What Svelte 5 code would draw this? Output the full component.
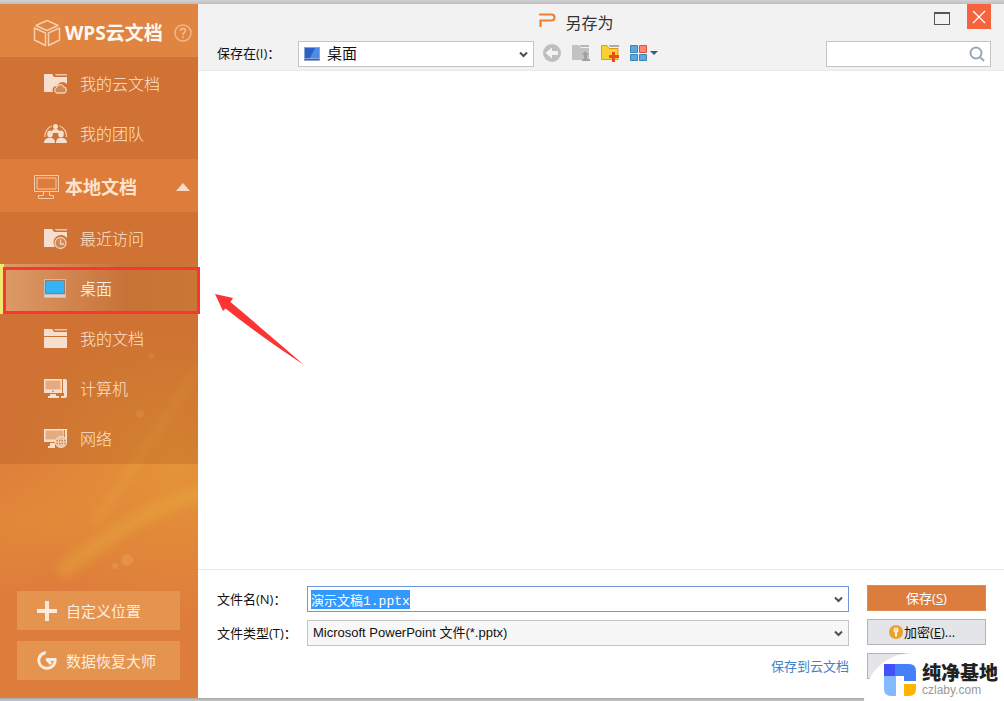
<script>
  import { onMount } from 'svelte';

  const cloudItems = [
    { icon: 'cloud', label: '我的云文档' },
    { icon: 'team', label: '我的团队' }
  ];
  const localItems = [
    { icon: 'recent', label: '最近访问' },
    { icon: 'desktop', label: '桌面' },
    { icon: 'docs', label: '我的文档' },
    { icon: 'computer', label: '计算机' },
    { icon: 'network', label: '网络' }
  ];

  let active = $state('desktop');
  let fileName = $state('演示文稿1.pptx');
  let nameField;

  onMount(() => {
    nameField.focus();
    nameField.select();
  });
</script>

{#snippet chevron()}
  <svg class="chevron" width="9" height="7" viewBox="0 0 9 7" aria-hidden="true">
    <path d="M1 1.500 4.500 5 8 1.500" fill="none" stroke="#505050" stroke-width="2" />
  </svg>
{/snippet}

{#snippet placeIcon(name)}
  <svg class="place-icon" width="24" height="22" viewBox="0 0 24 22" aria-hidden="true">
    {#if name === 'cloud'}
      <path d="M0 1h8l2 3h13v7a6 6 0 0 0-10 2 4 4 0 0 0-4 6H0z" fill="#f6dfce" />
      <path d="M11 1h12v1.500H12z" fill="#eec5a8" />
      <path d="M12.500 20a3 3 0 0 1 0-5.500 4 4 0 0 1 7.500-.5 3.200 3.200 0 0 1 .5 6z" fill="#cf8a58" stroke="#f3cfb4" stroke-width="1.300" />
    {:else if name === 'team'}
      <path d="M1 14A10.500 10.500 0 0 1 8 3M15.500 3a10.500 10.500 0 0 1 7 11" fill="none" stroke="#f0c9ac" stroke-width="1.300" />
      <g fill="#f6dfce">
        <circle cx="11.500" cy="3.500" r="2.500" /><path d="M7.500 10q0-4 4-4t4 4z" />
        <ellipse cx="6" cy="11" rx="2.800" ry="3.500" /><path d="M0 20q0-4 4-5h4q3 1 3 5z" />
        <ellipse cx="17" cy="11" rx="2.800" ry="3.500" /><path d="M12 20q0-4 3-5h4q4 1 4 5z" />
      </g>
    {:else if name === 'recent'}
      <path d="M0 1h8l2 3h13v6a7 7 0 0 0-12 9H0z" fill="#f6dfce" />
      <path d="M11 1h12v1.500H12z" fill="#eec5a8" />
      <circle cx="16.500" cy="15" r="5.500" fill="#cf8650" stroke="#f3cfb4" stroke-width="1.300" />
      <path d="M16.500 11.500V16h3.500" fill="none" stroke="#f3cfb4" stroke-width="1.300" />
    {:else if name === 'desktop'}
      <path d="M0 1h22v19H0z" fill="#c9bdb9" />
      <path d="M1.500 2.500h19v13h-19z" fill="#31b6f3" stroke="#8e7c78" />
      <path d="M1 17h20v2H1z" fill="#ddd1ca" />
    {:else if name === 'docs'}
      <path d="M0 1h8l2 3h13v4H0zM0 9h23v11H0z" fill="#f6dfce" />
      <path d="M10 1h13v1.500H11z" fill="#eec5a8" />
    {:else if name === 'computer'}
      <path d="M19 1h2q2 0 2 2v15q0 2-3 2h-3v-2h3v-3h-1z" fill="#f6dfce" />
      <path d="M0 1h18v14H0z" fill="#f6dfce" />
      <path d="M1.500 2.500h15v9h-15z" fill="#e6aa80" />
      <circle cx="9" cy="13.200" r=".8" fill="#b96f3d" />
      <path d="M6 16h6v2h3v2H4v-2h2z" fill="#f6dfce" />
    {:else}
      <path d="M0 1h23v13H0z" fill="#f6dfce" />
      <path d="M1.500 2.500h18v9h-18z" fill="#e6aa80" />
      <path d="M20.500 2v10" stroke="#cf8340" />
      <path d="M6 15h5v5H4v-2h2z" fill="#f6dfce" />
      <circle cx="17" cy="14" r="5.500" fill="#cf8040" stroke="#f6dfce" stroke-width="1.200" />
      <path d="M17 8.500v11M11.500 14h11M13 11h8M13 17h8" stroke="#f6dfce" fill="none" />
      <ellipse cx="17" cy="14" rx="2.800" ry="5.500" fill="none" stroke="#f6dfce" />
    {/if}
  </svg>
{/snippet}

{#snippet placeList(items)}
  <ul class="places">
    {#each items as item}
      <li>
        <button class="place" class:active={active === item.icon} onclick={() => (active = item.icon)}>
          {@render placeIcon(item.icon)}
          <span>{item.label}</span>
        </button>
      </li>
    {/each}
  </ul>
{/snippet}

<div class="backdrop">
  <div class="edge top"></div>
  <div class="dialog">
    <aside>
      <svg class="glow" viewBox="0 0 198 400" preserveAspectRatio="none" aria-hidden="true">
        <defs>
          <radialGradient id="warm">
            <stop offset="0" stop-color="#e9a236" stop-opacity=".6" />
            <stop offset="1" stop-color="#e9a236" stop-opacity="0" />
          </radialGradient>
          <filter id="soft" x="-20%" y="-20%" width="140%" height="140%"><feGaussianBlur stdDeviation="4" /></filter>
        </defs>
        <ellipse cx="175" cy="170" rx="170" ry="150" fill="url(#warm)" />
        <ellipse cx="20" cy="225" rx="120" ry="70" fill="url(#warm)" opacity=".5" />
        <g filter="url(#soft)" fill="none" stroke="#e9b040">
          <path d="M198 70Q160 130 95 225" stroke-width="5" opacity=".4" />
          <path d="M205 195Q150 205 60 275" stroke-width="16" opacity=".35" />
        </g>
        <g fill="#efb268" opacity=".3">
          <circle cx="127" cy="262" r="6" /><circle cx="115" cy="268" r="3" /><circle cx="140" cy="116" r="4" /><circle cx="151" cy="58" r="3" />
        </g>
      </svg>
      <div class="section cloud-head">
        <svg width="28" height="28" viewBox="0 0 28 28" fill="none" stroke="#f7cfae" stroke-width="1.500" stroke-linejoin="round" aria-hidden="true">
          <path d="M14 1.500 25 6.500 14 11.500 3 6.500z" />
          <path d="M1.500 9 12.500 14v12.500L1.500 21z" />
          <path d="M26.500 9 15.500 14v12.500L26.500 21z" />
        </svg>
        <h2>WPS云文档</h2>
        <button class="help" aria-label="帮助">
          <svg width="18" height="18" viewBox="0 0 18 18" fill="none" stroke="#f1b78a" aria-hidden="true">
            <circle cx="9" cy="9" r="8" stroke-width="1.500" />
            <path d="M6.500 7q0-2.500 2.500-2.500T11.500 7Q11.500 8 9 9.800V11M9 12.300v1.700" stroke-width="1.800" />
          </svg>
        </button>
      </div>
      {@render placeList(cloudItems)}
      <div class="section local-head">
        <svg width="28" height="28" viewBox="0 0 28 28" fill="none" stroke="#f5cbad" aria-hidden="true">
          <path d="M1.500 2.500h24v16h-24zM4 5h19v11H4z" />
          <path d="M10.500 18.500v4h-5v3h15v-3h-4v-4" />
        </svg>
        <h2>本地文档</h2>
        <button class="help" aria-label="收起">
          <svg width="14" height="8" viewBox="0 0 14 8" aria-hidden="true"><path d="M7 0l7 8H0z" fill="#f9dcc7" /></svg>
        </button>
      </div>
      {@render placeList(localItems)}
      <div class="extras">
        <button>
          <svg width="20" height="20" viewBox="0 0 20 20" aria-hidden="true"><path d="M8 0h4v8h8v4h-8v8H8v-8H0V8h8z" fill="#fdecdb" /></svg>
          自定义位置
        </button>
        <button>
          <svg width="20" height="20" viewBox="0 0 20 20" fill="none" stroke="#fdecdb" aria-hidden="true">
            <path d="M8 2Q2 3.500 1.700 9.500A8.300 8.300 0 0 0 18 11V8.500H9" stroke-width="3" />
            <path d="M9.500 8 14 13" stroke-width="3" />
            <path d="M4 3l5-2" stroke-width="2" />
          </svg>
          数据恢复大师
        </button>
      </div>
    </aside>

    <main>
      <header>
        <div class="title-row">
          <h1>
            <svg width="17" height="15" viewBox="0 0 17 15" aria-hidden="true">
              <path d="M0 1.500h12.500q3 0 3 3t-3 3H1.500V14" fill="none" stroke="#f0802f" stroke-width="2.200" />
            </svg>
            另存为
          </h1>
          <div class="window-buttons">
            <button class="maximize" aria-label="最大化"><i></i></button>
            <button class="close" aria-label="关闭">
              <svg width="14" height="14" viewBox="0 0 14 14" aria-hidden="true"><path d="M1 1l12 12M13 1 1 13" stroke="#fff" stroke-width="1.300" /></svg>
            </button>
          </div>
        </div>
        <div class="tool-row">
          <label for="folder">保存在(I)：</label>
          <div class="field folder">
            <select id="folder"><option>桌面</option></select>
            <svg class="lead" width="16" height="14" viewBox="0 0 16 14" aria-hidden="true">
              <path d="M0 0h16v14H0z" fill="#8aa4cf" /><path d="M1 1h14v10H1z" fill="#2c60c8" />
              <path d="M6 11 11 1h4v10z" fill="#4f8ce8" /><path d="M1 12h14v1H1z" fill="#425f94" />
            </svg>
            {@render chevron()}
          </div>
          <div class="tools">
            <button aria-label="后退">
              <svg width="20" height="20" viewBox="0 0 20 20" aria-hidden="true">
                <circle cx="10" cy="10" r="9" fill="#bfbfbf" />
                <path d="M3.500 10l6.500-5.500V8h6v4h-6v3.500z" fill="#f4f4f4" />
              </svg>
            </button>
            <button aria-label="向上一级">
              <svg width="20" height="20" viewBox="0 0 20 20" aria-hidden="true">
                <path d="M1 2h7l2 3h8v12H1z" fill="#c2c2c2" /><path d="M9 2h9v2h-8z" fill="#b5b5b5" />
                <path d="M14 8l4 4h-2v4h3v2h-8v-2h2v-4h-2z" fill="#a0a0a0" />
              </svg>
            </button>
            <button aria-label="新建文件夹">
              <svg width="20" height="20" viewBox="0 0 20 20" aria-hidden="true">
                <path d="M1.500 2.500H7l2 3h9v11H1.500z" fill="#fbd12f" stroke="#d99c1c" />
                <path d="M9 2h10v2h-9z" fill="#aaa" />
                <path d="M12 9h3v3h4v3h-4v4h-3v-4H9v-3h3z" fill="#ee4b1c" />
              </svg>
            </button>
            <button aria-label="视图">
              <svg width="30" height="20" viewBox="0 0 30 20" aria-hidden="true">
                <g stroke="#3b83bb" fill="#5fa6d9"><path d="M1.500 2.500h7v7h-7zM1.500 11.500h7v6h-7zM10.500 11.500h7v6h-7z" /></g>
                <path d="M10.500 2.500h7v7h-7z" fill="#ff8674" stroke="#e35040" />
                <path d="M21 8h8l-4 4z" fill="#355b8c" />
              </svg>
            </button>
          </div>
          <div class="field search">
            <input type="search" aria-label="搜索" />
            <svg class="chevron" width="16" height="16" viewBox="0 0 16 16" fill="none" stroke="#9da8b2" stroke-width="2" aria-hidden="true">
              <circle cx="7" cy="7" r="5.500" /><path d="M10.500 10.500 15 15" />
            </svg>
          </div>
        </div>
      </header>

      <section class="files" aria-label="文件列表"></section>

      <footer>
        <div class="form">
          <label for="name">文件名(N)：</label>
          <div class="field name">
            <input id="name" type="text" autocomplete="off" bind:value={fileName} bind:this={nameField} />
            {@render chevron()}
          </div>
          <label for="type">文件类型(T)：</label>
          <div class="field type">
            <select id="type"><option>Microsoft PowerPoint 文件(*.pptx)</option></select>
            {@render chevron()}
          </div>
          <a href="#cloud">保存到云文档</a>
        </div>
        <div class="actions">
          <button class="primary">保存(<u>S</u>)</button>
          <button class="encrypt">
            <svg width="14" height="14" viewBox="0 0 14 14" aria-hidden="true">
              <circle cx="7" cy="7" r="7" fill="#e9a32d" />
              <circle cx="7" cy="5" r="2.500" fill="#fff3d8" /><path d="M6 6h2v5.500H6z" fill="#fff3d8" />
              <circle cx="7" cy="4.500" r=".8" fill="#e9a32d" />
            </svg>加密(<u>E</u>)...
          </button>
          <button aria-label="取消"></button>
        </div>
      </footer>
    </main>

    <div class="marker"></div>
    <svg class="arrow" width="90" height="74" viewBox="0 0 90 74" aria-hidden="true">
      <path d="M0 1 18 5 15.500 9Q50 38 89 72 45 43 10.500 15.500L8 18z" fill="#fb3434" />
    </svg>
  </div>
  <div class="edge bottom"></div>

  <div class="brand">
    <svg width="32" height="32" viewBox="0 0 32 32" aria-hidden="true">
      <path d="M0 0h11v12H0z" fill="#4251fb" />
      <path d="M11 0h14q7 0 7 7v10H20v-5h-9z" fill="#4580fb" />
      <path d="M0 12h12v20H7q-7 0-7-7z" fill="#82b9ff" />
      <path d="M20 20h12v5q0 7-7 7h-5z" fill="#ffb500" />
    </svg>
    <div><strong>纯净基地</strong><span>czlaby.com</span></div>
  </div>
</div>

<style>
  :global(body) {
    margin: 0;
  }
  .backdrop {
    position: relative;
    display: flex;
    flex-direction: column;
    min-height: 100vh;
    background: #fff;
    color: #111;
    font: 13px/20px "Open Sans", "Noto Sans CJK SC", sans-serif;
  }
  .backdrop *,
  .backdrop {
    box-sizing: border-box;
  }
  button,
  input,
  select {
    margin: 0;
    padding: 0;
    border: 0;
    border-radius: 0;
    background: none;
    color: inherit;
    font: inherit;
    outline: none;
    appearance: none;
  }
  svg {
    display: block;
    flex: none;
  }
  h1,
  h2,
  ul {
    margin: 0;
    padding: 0;
    font-weight: 400;
    list-style: none;
  }
  .edge {
    height: 4px;
    background: linear-gradient(#d2d2d2, #bdbdbd);
  }
  .edge.bottom {
    height: 3px;
    background: linear-gradient(#a8a8a8, #c8c8c8);
  }
  .dialog {
    position: relative;
    display: flex;
    flex: 1;
  }

  aside {
    position: relative;
    isolation: isolate;
    display: flex;
    flex: none;
    flex-direction: column;
    width: 198px;
    background: #de7d3b;
    color: #fde2cd;
  }
  .glow {
    position: absolute;
    z-index: -1;
    bottom: 0;
    left: 0;
    width: 100%;
    height: 400px;
    overflow: hidden;
  }
  .section {
    display: flex;
    align-items: center;
    height: 54px;
    padding: 2px 6px 0 33px;
    border-bottom: 1px solid #cb7335;
  }
  .cloud-head {
    padding-top: 4px;
    background: #e08442;
  }
  .section h2 {
    flex: 1;
    padding-left: 4px;
    font-size: 18px;
    font-weight: 700;
    line-height: 24px;
    white-space: nowrap;
  }
  .cloud-head h2 {
    color: #fff8f0;
    font-size: 19px;
  }
  .help {
    display: grid;
    place-items: center;
    width: 18px;
    height: 18px;
  }
  .places {
    padding-top: 1px;
    background: rgba(166, 86, 30, 0.27);
  }
  .place {
    display: flex;
    align-items: center;
    gap: 12px;
    width: 100%;
    height: 50px;
    padding-left: 44px;
    font-size: 16px;
    font-weight: 300;
  }
  .place.active {
    background: linear-gradient(90deg, #dc9a68, #c77236 65%, #c97834);
    color: #fff;
    border-left: 4px solid #f1e96e;
    padding-left: 40px;
  }
  .extras {
    display: grid;
    gap: 11px;
    margin-top: auto;
    padding: 24px 18px 18px 17px;
  }
  .extras button {
    display: flex;
    align-items: center;
    gap: 9px;
    height: 39px;
    padding-left: 20px;
    background: #e5944f;
    color: #fdecdb;
    font-size: 15px;
  }

  main {
    display: flex;
    flex: 1;
    flex-direction: column;
    min-width: 0;
  }
  header {
    height: 67px;
    border-bottom: 1px solid #e9e9e9;
    background: #f2f2f2;
  }
  .title-row {
    display: grid;
    grid-template-columns: 1fr auto 1fr;
    height: 37px;
    padding: 0 13px 0 0;
  }
  h1 {
    display: flex;
    grid-column: 2;
    align-items: center;
    gap: 9px;
    margin-right: 36px;
    color: #333;
    font-size: 16px;
    line-height: 24px;
  }
  h1 svg {
    margin-bottom: 4px;
  }
  .window-buttons {
    display: flex;
    justify-content: flex-end;
    gap: 16px;
  }
  .maximize {
    display: grid;
    width: 18px;
    height: 28px;
    place-items: center;
  }
  .maximize i {
    width: 16px;
    height: 13px;
    border: 1px solid #555;
    border-top-width: 2px;
  }
  .close {
    display: grid;
    place-items: center;
    width: 24px;
    height: 25px;
    background: #f5633f;
  }
  .tool-row {
    display: flex;
    align-items: center;
    height: 26px;
    padding: 0 13px 0 19px;
  }
  .tool-row label {
    width: 81px;
    padding-bottom: 2px;
    white-space: nowrap;
  }
  .field {
    display: grid;
    align-items: center;
    height: 26px;
    border: 1px solid #c4c4c4;
    background: #fff;
  }
  .field > :global(*) {
    grid-area: 1 / 1;
  }
  .field input,
  .field select {
    width: 100%;
    height: 24px;
    min-width: 0;
    padding: 0 22px 0 4px;
  }
  .chevron {
    justify-self: end;
    margin-right: 5px;
    pointer-events: none;
  }
  .lead {
    margin-left: 5px;
    pointer-events: none;
  }
  .folder {
    flex: 0 1 236px;
  }
  .folder select {
    padding: 0 22px 2px 28px;
    font-size: 15px;
  }
  .tools {
    display: flex;
    gap: 9px;
    padding: 0 0 2px 8px;
  }
  .search {
    flex: 0 1 165px;
    margin-left: auto;
  }

  .files {
    flex: 1;
    background: #fff;
  }
  footer {
    display: flex;
    gap: 18px;
    height: 129px;
    padding: 15px 18px 0 19px;
    border-top: 1px solid #e6eaec;
  }
  .form {
    display: grid;
    flex: 1;
    grid-template-columns: 90px 1fr;
    grid-auto-rows: 26px;
    row-gap: 8px;
    align-items: center;
    min-width: 0;
    padding-top: 1px;
  }
  .form label {
    white-space: nowrap;
  }
  .name {
    border-color: #7694dc;
  }
  .name input {
    padding-left: 3px;
    font: 13px/16px "Liberation Mono", "Noto Sans CJK SC", monospace;
  }
  .name input::selection {
    background: #3399ff;
    color: #fff;
  }
  .type {
    background: #f7f7f7;
  }
  .type select {
    padding-left: 5px;
    font-family: "Liberation Sans", "Noto Sans CJK SC", sans-serif;
  }
  .form a {
    grid-column: 2;
    justify-self: end;
    padding-bottom: 2px;
    color: #4581c6;
    text-decoration: none;
  }
  .actions {
    display: grid;
    flex: none;
    grid-auto-rows: 26px;
    gap: 8px;
    width: 119px;
  }
  .actions button {
    display: flex;
    align-items: center;
    justify-content: center;
    border: 1px solid #b0b4b8;
    background: #e3e5e8;
  }
  .actions .encrypt {
    padding-right: 9px;
  }
  .actions svg {
    margin-right: 1px;
  }
  .actions .primary {
    border-color: #e1894e;
    background: #dc7d3d;
    color: #fff;
  }

  .marker {
    position: absolute;
    top: 263px;
    left: 3px;
    width: 197px;
    height: 47px;
    border: 3px solid #fb3434;
    pointer-events: none;
  }
  .arrow {
    position: absolute;
    top: 289px;
    left: 215px;
    pointer-events: none;
  }
  .brand {
    position: absolute;
    right: 0;
    bottom: 0;
    display: flex;
    align-items: center;
    gap: 6px;
    width: 140px;
    height: 48px;
    padding: 5px 0 0 20px;
    border-top-left-radius: 48px;
    background: #fff;
    white-space: nowrap;
  }
  .brand div {
    display: flex;
    flex-direction: column;
  }
  .brand strong {
    color: #222;
    font: 900 19px/22px "Noto Sans CJK SC", sans-serif;
  }
  .brand span {
    color: #999;
    font: 12px/15px "Liberation Sans", sans-serif;
  }
</style>
